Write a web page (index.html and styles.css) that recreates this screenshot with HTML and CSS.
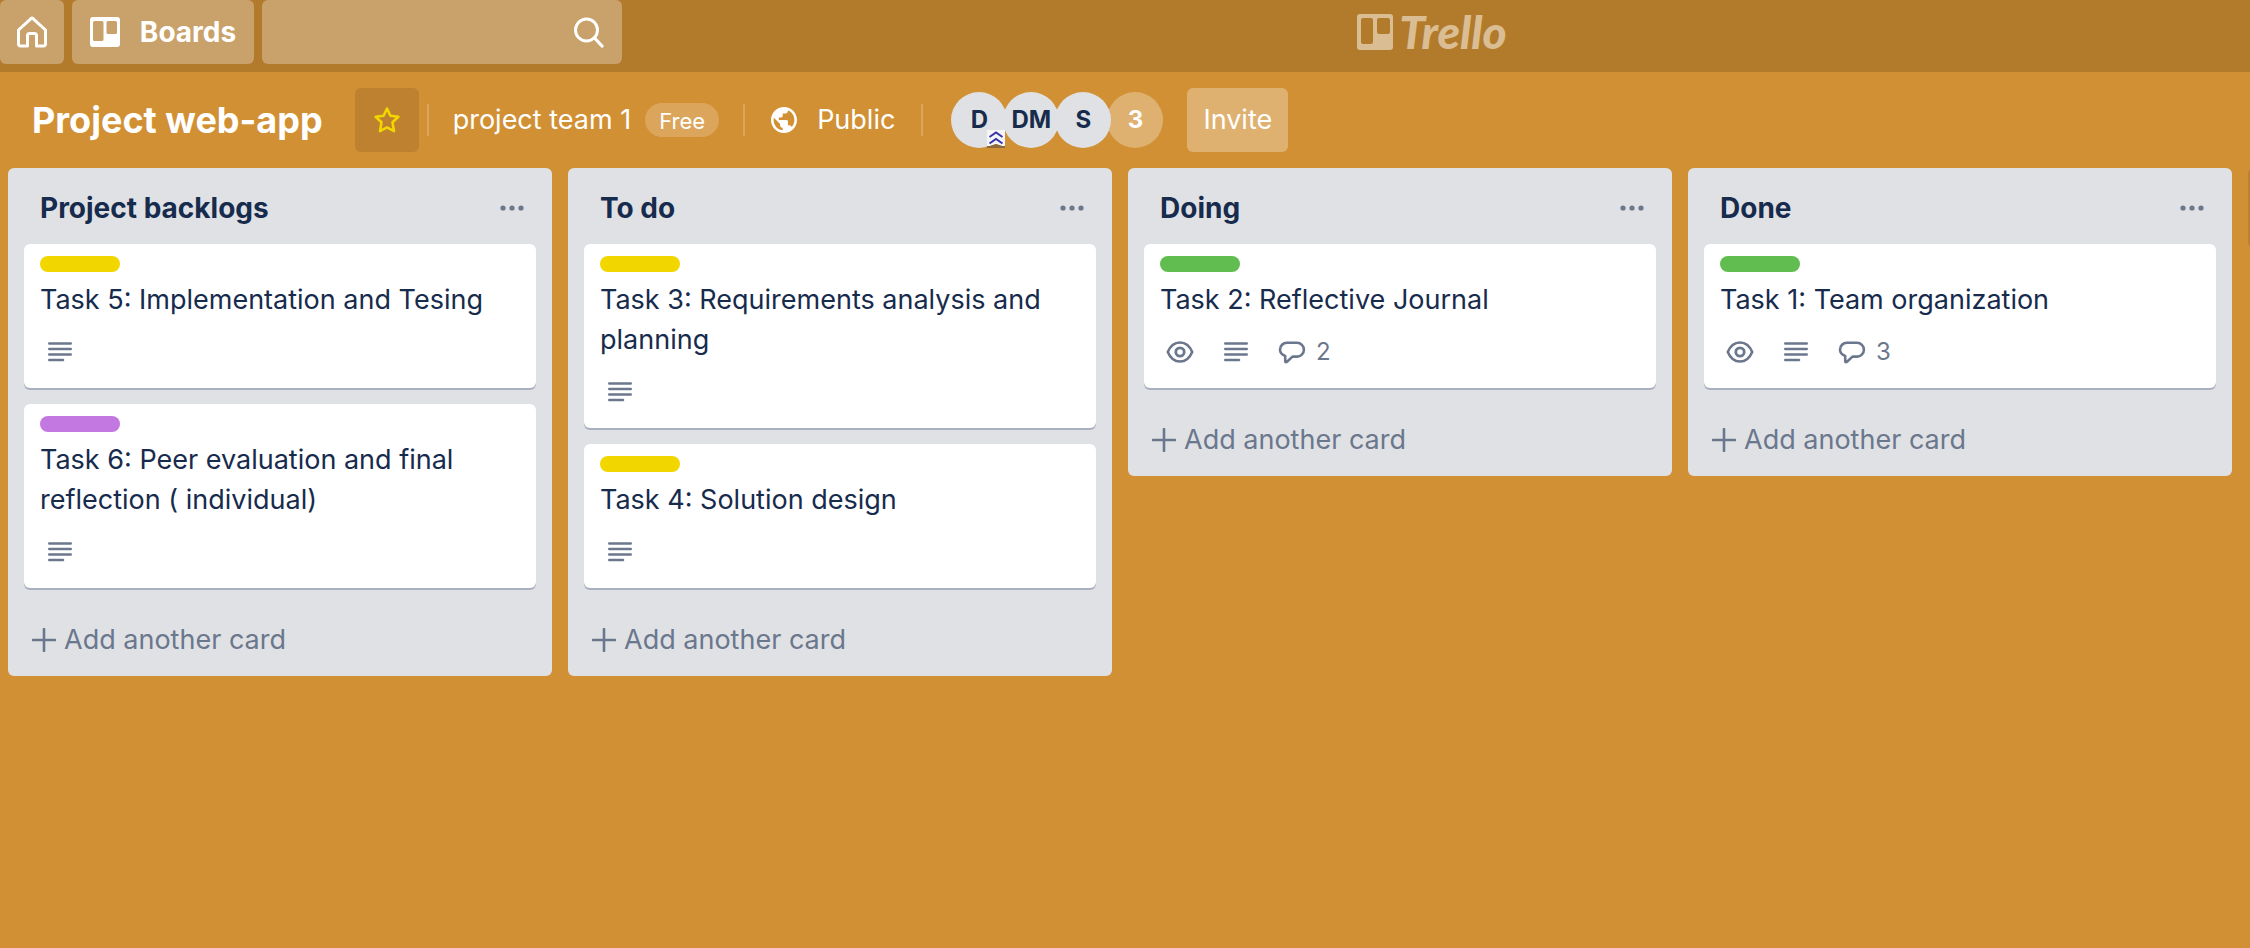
FILE: index.html
```html
<!DOCTYPE html>
<html lang="en">
<head>
<meta charset="utf-8">
<title>Project web-app | Trello</title>
<link rel="stylesheet" href="styles.css">
</head>
<body>
<svg class="sprite" aria-hidden="true">
  <symbol id="lines" viewBox="-2 0 28 24"><path d="M1.300 3.500h21.400M1.300 9h21.400M1.300 14.500h21.400M1.300 20h13.700" fill="none" stroke="currentColor" stroke-width="2.600" stroke-linecap="round"/></symbol>
  <symbol id="eye" viewBox="0 0 28 24"><path d="M1.800 12C4.500 5.500 8.500 2.500 14 2.500S23.500 5.500 26.200 12C23.500 18.500 19.500 21.500 14 21.500S4.500 18.500 1.800 12Z" fill="none" stroke="currentColor" stroke-width="2.600" stroke-linejoin="round"/><circle cx="14" cy="12" r="4.200" fill="none" stroke="currentColor" stroke-width="2.800"/></symbol>
  <symbol id="comment" viewBox="0 0 28 24"><path d="M9 2.800h10a6.900 6.900 0 0 1 0 13.800h-4.500l-5.500 5.200c-1 .8-1.800.4-1.800-.8v-5C3.500 14.500 2 12.500 2 9.700A6.900 6.900 0 0 1 9 2.800Z" fill="none" stroke="currentColor" stroke-width="2.600" stroke-linejoin="round"/></symbol>
  <symbol id="plus" viewBox="0 0 24 24"><path d="M12 1v22M1 12h22" stroke="currentColor" stroke-width="2.600" stroke-linecap="round"/></symbol>
  <symbol id="dots" viewBox="0 0 24 6"><circle cx="3" cy="3" r="2.600"/><circle cx="12" cy="3" r="2.600"/><circle cx="21" cy="3" r="2.600"/></symbol>
</svg>

<header class="topbar">
  <a class="top-btn" href="#" aria-label="Home">
    <svg class="icon-home" viewBox="0 0 32 32"><path d="M2.500 14 14.700 2.800a1.900 1.900 0 0 1 2.600 0L29.500 14v14.200a1.800 1.800 0 0 1-1.800 1.800H20.500V19.500a2 2 0 0 0-2-2h-5a2 2 0 0 0-2 2V30H4.300A1.800 1.800 0 0 1 2.500 28.200Z" fill="none" stroke="currentColor" stroke-width="3" stroke-linejoin="round"/></svg>
  </a>
  <button class="top-btn top-btn-boards" type="button">
    <svg class="icon-board" viewBox="0 0 30 30"><path fill="currentColor" fill-rule="evenodd" d="M3 0h24a3 3 0 0 1 3 3v24a3 3 0 0 1-3 3H3a3 3 0 0 1-3-3V3a3 3 0 0 1 3-3Zm1.500 4a1.500 1.500 0 0 0-1.500 1.500v17a1.500 1.500 0 0 0 1.500 1.500h7.500a1.500 1.500 0 0 0 1.500-1.500V5.500a1.500 1.500 0 0 0-1.500-1.500Zm13.500 0a1.500 1.500 0 0 0-1.500 1.500v10a1.500 1.500 0 0 0 1.500 1.500h7.500a1.500 1.500 0 0 0 1.500-1.500V5.500a1.500 1.500 0 0 0-1.500-1.500Z"/></svg>
    Boards
  </button>
  <form class="search">
    <input class="search-input" type="text" aria-label="Search">
    <button class="search-btn" type="button" aria-label="Search">
      <svg class="icon-search" viewBox="1 0 32 32"><circle cx="13.500" cy="14" r="11" fill="none" stroke="currentColor" stroke-width="3"/><path d="m21.500 22 7.500 8" stroke="currentColor" stroke-width="3.200" stroke-linecap="round"/></svg>
    </button>
  </form>
  <div class="brand">
    <a class="logo" href="#">
      <svg class="logo-mark" viewBox="0 0 36 36"><path fill="currentColor" fill-rule="evenodd" d="M3 0h30a3 3 0 0 1 3 3v30a3 3 0 0 1-3 3H3a3 3 0 0 1-3-3V3a3 3 0 0 1 3-3Zm3 4a2 2 0 0 0-2 2v22a2 2 0 0 0 2 2h8a2 2 0 0 0 2-2V6a2 2 0 0 0-2-2Zm16 0a2 2 0 0 0-2 2v12a2 2 0 0 0 2 2h9a2 2 0 0 0 2-2V6a2 2 0 0 0-2-2Z"/></svg>
      <span class="logo-text">Trello</span>
    </a>
  </div>
</header>

<nav class="boardbar">
  <h1 class="board-name">Project web-app</h1>
  <button class="star" type="button" aria-label="Star board">
    <svg class="icon-star" viewBox="0 0 28 28"><path d="m14 2.500 3.400 7.300 8 1-5.900 5.500 1.500 8.900-7-3.800-7 3.800 1.500-8.900-5.900-5.500 8-1Z" fill="none" stroke="currentColor" stroke-width="2.600" stroke-linejoin="round"/></svg>
  </button>
  <span class="divider"></span>
  <a class="team" href="#">project team 1 <span class="plan">Free</span></a>
  <span class="divider"></span>
  <button class="visibility" type="button">
    <svg class="icon-globe" viewBox="2 2 20 20"><path fill="currentColor" d="M12 2C6.480 2 2 6.480 2 12s4.480 10 10 10 10-4.480 10-10S17.520 2 12 2zm-1 17.930c-3.950-.49-7-3.850-7-7.930 0-.62.080-1.210.210-1.790L9 15v1c0 1.100.9 2 2 2v1.930zm6.900-2.540c-.26-.81-1-1.390-1.900-1.390h-1v-3c0-.55-.45-1-1-1H8v-2h2c.55 0 1-.45 1-1V7h2c1.100 0 2-.9 2-2v-.41c2.930 1.190 5 4.060 5 7.410 0 2.080-.8 3.970-2.100 5.390z"/></svg>
    Public
  </button>
  <span class="divider"></span>
  <div class="members">
    <button class="member" type="button">D
      <svg class="admin" viewBox="0 0 18 18"><path d="M0 0h18v16l-3 0-6-2-6 2-3 0Z" fill="#f4f5f7"/><path d="M0 16h3l6-2 6 2h3v2H0Z" fill="#8b6b3a"/><path d="m2.500 7 6.500-4.500L15.500 7M2.500 13.500 9 9l6.500 4.500" fill="none" stroke="#3a32a8" stroke-width="2"/></svg>
    </button>
    <button class="member" type="button">DM</button>
    <button class="member" type="button">S</button>
    <button class="member member-more" type="button">3</button>
  </div>
  <button class="invite" type="button">Invite</button>
</nav>

<main class="board">
  <section class="list">
    <header class="list-head"><h2 class="list-title">Project backlogs</h2><button class="menu" type="button" aria-label="List actions"><svg class="icon-dots"><use href="#dots"/></svg></button></header>
    <article class="card">
      <span class="label yellow"></span>
      <h3 class="card-title">Task 5: Implementation and Tesing</h3>
      <div class="badges"><svg class="icon-badge"><use href="#lines"/></svg></div>
    </article>
    <article class="card">
      <span class="label purple"></span>
      <h3 class="card-title">Task 6: Peer evaluation and final reflection ( individual)</h3>
      <div class="badges"><svg class="icon-badge"><use href="#lines"/></svg></div>
    </article>
    <button class="add" type="button"><svg class="icon-plus"><use href="#plus"/></svg>Add another card</button>
  </section>

  <section class="list">
    <header class="list-head"><h2 class="list-title">To do</h2><button class="menu" type="button" aria-label="List actions"><svg class="icon-dots"><use href="#dots"/></svg></button></header>
    <article class="card">
      <span class="label yellow"></span>
      <h3 class="card-title">Task 3: Requirements analysis and planning</h3>
      <div class="badges"><svg class="icon-badge"><use href="#lines"/></svg></div>
    </article>
    <article class="card">
      <span class="label yellow"></span>
      <h3 class="card-title">Task 4: Solution design</h3>
      <div class="badges"><svg class="icon-badge"><use href="#lines"/></svg></div>
    </article>
    <button class="add" type="button"><svg class="icon-plus"><use href="#plus"/></svg>Add another card</button>
  </section>

  <section class="list">
    <header class="list-head"><h2 class="list-title">Doing</h2><button class="menu" type="button" aria-label="List actions"><svg class="icon-dots"><use href="#dots"/></svg></button></header>
    <article class="card">
      <span class="label green"></span>
      <h3 class="card-title">Task 2: Reflective Journal</h3>
      <div class="badges"><svg class="icon-badge"><use href="#eye"/></svg><svg class="icon-badge"><use href="#lines"/></svg><span class="count"><svg class="icon-badge"><use href="#comment"/></svg>2</span></div>
    </article>
    <button class="add" type="button"><svg class="icon-plus"><use href="#plus"/></svg>Add another card</button>
  </section>

  <section class="list">
    <header class="list-head"><h2 class="list-title">Done</h2><button class="menu" type="button" aria-label="List actions"><svg class="icon-dots"><use href="#dots"/></svg></button></header>
    <article class="card">
      <span class="label green"></span>
      <h3 class="card-title">Task 1: Team organization</h3>
      <div class="badges"><svg class="icon-badge"><use href="#eye"/></svg><svg class="icon-badge"><use href="#lines"/></svg><span class="count"><svg class="icon-badge"><use href="#comment"/></svg>3</span></div>
    </article>
    <button class="add" type="button"><svg class="icon-plus"><use href="#plus"/></svg>Add another card</button>
  </section>

  <button class="new-list" type="button" aria-label="Add list"></button>
</main>
</body>
</html>
```
FILE: styles.css
```css
* { box-sizing: border-box; }

body {
  margin: 0;
  background: #d29034;
  color: #172b4d;
  font: 27px/40px Inter, "Liberation Sans", sans-serif;
}

button, input { font: inherit; color: inherit; border: 0; background: none; padding: 0; margin: 0; }
a { color: inherit; text-decoration: none; }
h1, h2, h3 { margin: 0; font-size: inherit; }
svg { display: block; flex: none; }
.sprite { position: absolute; width: 0; height: 0; }

.topbar {
  display: flex;
  gap: 8px;
  height: 72px;
  padding-bottom: 8px;
  background: #b27b2c;
  color: #fff;
}

.top-btn {
  display: flex;
  align-items: center;
  justify-content: center;
  width: 64px;
  height: 64px;
  border-radius: 6px;
  background: #c9a26b;
}

.top-btn-boards {
  width: 182px;
  gap: 20px;
  font-size: 28px;
  font-weight: 700;
}

.icon-home, .icon-search { width: 32px; height: 32px; }
.icon-board { width: 30px; height: 30px; }

.search {
  display: flex;
  align-items: center;
  width: 360px;
  height: 64px;
  padding: 0 16px;
  border-radius: 6px;
  background: #c9a26b;
}

.search-input { flex: 1; min-width: 0; height: 100%; outline: 0; }

.brand { flex: 1; display: flex; justify-content: center; padding-right: 16px; }
.logo { display: flex; align-items: center; gap: 6px; color: #dabd92; }
.logo-mark { width: 36px; height: 36px; }
.logo-text { font-family: Lato, sans-serif; font-size: 46px; font-weight: 900; font-style: italic; }

.boardbar {
  display: flex;
  align-items: center;
  height: 96px;
  padding: 0 8px;
  color: #fff;
}

.board-name { padding: 0 24px; font-size: 36px; font-weight: 700; }

.star {
  display: flex;
  align-items: center;
  justify-content: center;
  width: 64px;
  height: 64px;
  margin-left: 8px;
  border-radius: 6px;
  background: #bd812f;
  color: #f2d600;
}

.icon-star { width: 28px; height: 28px; }
.divider { width: 2px; height: 32px; margin: 0 8px; background: #dba65c; }
.team { display: flex; align-items: center; gap: 14px; padding: 0 16px; }

.plan {
  height: 34px;
  padding: 0 14px;
  border-radius: 17px;
  background: #dba65c;
  font-size: 22px;
  line-height: 36px;
}

.visibility { display: flex; align-items: center; gap: 20px; padding: 0 18px; }
.icon-globe { width: 26px; height: 26px; }
.members { display: flex; margin-left: 20px; }

.member {
  position: relative;
  width: 56px;
  height: 56px;
  margin-right: -4px;
  border-radius: 50%;
  background: #dfe1e4;
  color: #172b4d;
  font-size: 24px;
  font-weight: 700;
}

.member-more { margin-right: 0; background: #dfb171; color: #fff; z-index: -1; }
.admin { position: absolute; right: 2px; bottom: 0; width: 18px; height: 18px; }

.invite {
  height: 64px;
  margin-left: 24px;
  padding: 0 16px;
  border-radius: 6px;
  background: #dfb171;
}

.board { display: flex; align-items: flex-start; gap: 16px; padding: 0 0 8px 8px; overflow: hidden; }

.list {
  display: flex;
  flex: none;
  flex-direction: column;
  width: 544px;
  padding: 0 16px 8px;
  border-radius: 6px;
  background: #dfe1e5;
}

.list-head { display: flex; align-items: center; justify-content: space-between; height: 76px; padding: 4px 12px 0 16px; }
.list-title { font-size: 28px; font-weight: 700; }
.icon-dots { width: 24px; height: 6px; fill: #6b778c; }

.card {
  display: flex;
  flex-direction: column;
  margin-bottom: 16px;
  padding: 12px 16px 4px;
  border-radius: 6px;
  background: #fff;
  box-shadow: 0 2px 0 #a9b0bd;
}

.label { width: 80px; height: 16px; margin-bottom: 8px; border-radius: 8px; }
.yellow { background: #f2d600; }
.green { background: #61bd4f; }
.purple { background: #c377e0; }
.card-title { font-weight: 400; }

.badges { display: flex; align-items: center; gap: 28px; height: 64px; padding: 0 6px; color: #6b778c; font-size: 24px; }
.count { display: flex; align-items: center; gap: 10px; }
.icon-badge { width: 28px; height: 24px; }
.icon-plus { width: 24px; height: 24px; }

.add { display: flex; align-items: center; gap: 8px; height: 56px; margin-top: 8px; padding: 0 8px; color: #6b778c; }

.new-list { flex: none; width: 544px; height: 80px; border-radius: 6px; background: #bd812f; }
```
